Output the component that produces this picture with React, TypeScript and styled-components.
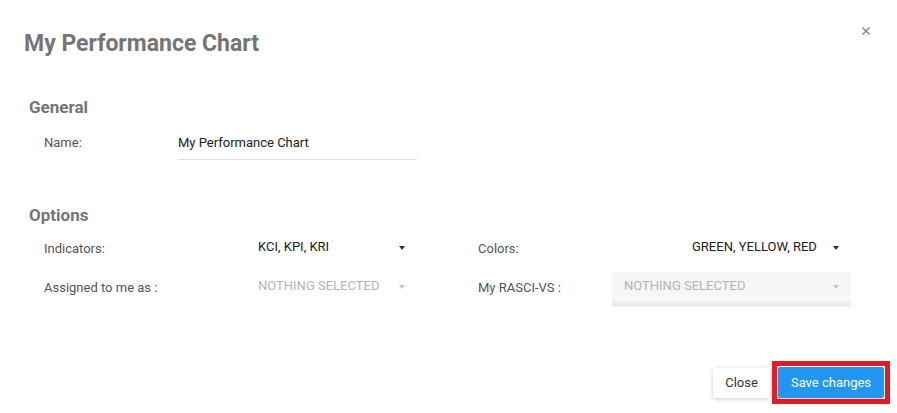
import React from "react";
import styled, { createGlobalStyle } from "styled-components";

const GlobalStyle = createGlobalStyle`
  html, body {
    margin: 0;
    padding: 0;
    background: #ffffff;
  }
  body {
    font-family: Roboto, "Liberation Sans", Arial, sans-serif;
  }
  * { box-sizing: border-box; }
`;

const Modal = styled.div`
  position: relative;
  width: 897px;
  height: 413px;
  background: #ffffff;
  overflow: hidden;
  font-family: Roboto, "Liberation Sans", Arial, sans-serif;
  display: flex;
  flex-direction: column;
`;

const Header = styled.div`
  display: flex;
  justify-content: space-between;
  align-items: flex-start;
  padding: 27px 27px 0 24px;
`;

const Title = styled.h1`
  margin: 3px 0 0 0;
  font-size: 23px;
  line-height: 28px;
  font-weight: 700;
  color: #757575;
`;

const CloseIcon = styled.button`
  width: 8px;
  height: 8px;
  padding: 0;
  border: none;
  background: transparent;
  display: flex;
  cursor: pointer;
`;

const Body = styled.div`
  padding: 0 0 0 29px;
`;

const Section = styled.section<{ $top: number }>`
  margin-top: ${(p) => p.$top}px;
`;

const SectionTitle = styled.h2<{ $gap: number }>`
  margin: 0 0 ${(p) => p.$gap}px 0;
  font-size: 17px;
  line-height: 20px;
  font-weight: 700;
  color: #757575;
`;

const Columns = styled.div`
  display: flex;
  gap: 61px;
  padding-left: 15px;
`;

const FieldGroup = styled.div`
  display: flex;
  flex-direction: column;
  gap: 4px;
`;

const FieldRow = styled.div`
  display: grid;
  grid-template-columns: 134px 239px;
  align-items: start;
`;

const Label = styled.label<{ $offset?: number }>`
  font-size: 13px;
  line-height: 16px;
  color: #555555;
  padding-top: ${(p) => p.$offset ?? 8}px;
`;

const TextInput = styled.div`
  height: 31px;
  line-height: 28px;
  font-size: 13px;
  color: #212121;
  border-bottom: 1px solid #e0e0e0;
`;

const Select = styled.div<{ $disabled?: boolean; $full?: boolean }>`
  justify-self: end;
  width: ${(p) => (p.$full ? "239px" : "171px")};
  height: 35px;
  padding: 0 12px;
  display: flex;
  justify-content: space-between;
  align-items: flex-start;
  background: ${(p) => (p.$disabled && p.$full ? "#f6f6f6" : "transparent")};
  border-bottom: 5px solid ${(p) => (p.$disabled && p.$full ? "#ececec" : "transparent")};
`;

const SelectValue = styled.span<{ $disabled?: boolean }>`
  font-size: 13px;
  line-height: 28px;
  text-transform: uppercase;
  color: ${(p) => (p.$disabled ? "#b3b3b3" : "#212121")};
`;

const Caret = styled.span<{ $disabled?: boolean }>`
  margin-top: 13px;
  width: 0;
  height: 0;
  border-left: 3.5px solid transparent;
  border-right: 3.5px solid transparent;
  border-top: 4px solid ${(p) => (p.$disabled ? "#c4c4c4" : "#333333")};
`;

const Footer = styled.div`
  margin-top: auto;
  display: flex;
  justify-content: flex-end;
  align-items: center;
  padding: 0 7px 9px 0;
`;

const Button = styled.button<{ $primary?: boolean }>`
  font-family: Roboto, "Liberation Sans", Arial, sans-serif;
  font-size: 13px;
  border: none;
  border-radius: 2px;
  cursor: pointer;
  height: ${(p) => (p.$primary ? "31px" : "30px")};
  width: ${(p) => (p.$primary ? "106px" : "57px")};
  padding: 0;
  color: ${(p) => (p.$primary ? "#ffffff" : "#333333")};
  background: ${(p) => (p.$primary ? "#2196f3" : "#ffffff")};
  box-shadow: ${(p) =>
    p.$primary
      ? "0 1px 2px rgba(0,0,0,0.2)"
      : "0 1px 4px rgba(0,0,0,0.22)"};
`;

const Highlight = styled.div`
  margin-left: 2px;
  padding: 1px;
  border: 5px solid #e31b23;
  display: flex;
`;

export default function App() {
  return (
    <Modal>
      <GlobalStyle />
      <Header>
        <Title>My Performance Chart</Title>
        <CloseIcon aria-label="Close">
          <svg width="8" height="8" viewBox="0 0 8 8">
            <path d="M0.5 0.5 L7.5 7.5 M7.5 0.5 L0.5 7.5" stroke="#8a8a8a" strokeWidth="1.5" />
          </svg>
        </CloseIcon>
      </Header>
      <Body>
        <Section $top={39}>
          <SectionTitle $gap={12}>General</SectionTitle>
          <Columns>
            <FieldRow>
              <Label $offset={6}>Name:</Label>
              <TextInput>My Performance Chart</TextInput>
            </FieldRow>
          </Columns>
        </Section>
        <Section $top={45}>
          <SectionTitle $gap={8}>Options</SectionTitle>
          <Columns>
            <FieldGroup>
              <FieldRow>
                <Label>Indicators:</Label>
                <Select>
                  <SelectValue>KCI, KPI, KRI</SelectValue>
                  <Caret />
                </Select>
              </FieldRow>
              <FieldRow>
                <Label>Assigned to me as :</Label>
                <Select $disabled>
                  <SelectValue $disabled>Nothing selected</SelectValue>
                  <Caret $disabled />
                </Select>
              </FieldRow>
            </FieldGroup>
            <FieldGroup>
              <FieldRow>
                <Label>Colors:</Label>
                <Select>
                  <SelectValue>Green, Yellow, Red</SelectValue>
                  <Caret />
                </Select>
              </FieldRow>
              <FieldRow>
                <Label>My RASCI-VS :</Label>
                <Select $disabled $full>
                  <SelectValue $disabled>Nothing selected</SelectValue>
                  <Caret $disabled />
                </Select>
              </FieldRow>
            </FieldGroup>
          </Columns>
        </Section>
      </Body>
      <Footer>
        <Button>Close</Button>
        <Highlight>
          <Button $primary>Save changes</Button>
        </Highlight>
      </Footer>
    </Modal>
  );
}
